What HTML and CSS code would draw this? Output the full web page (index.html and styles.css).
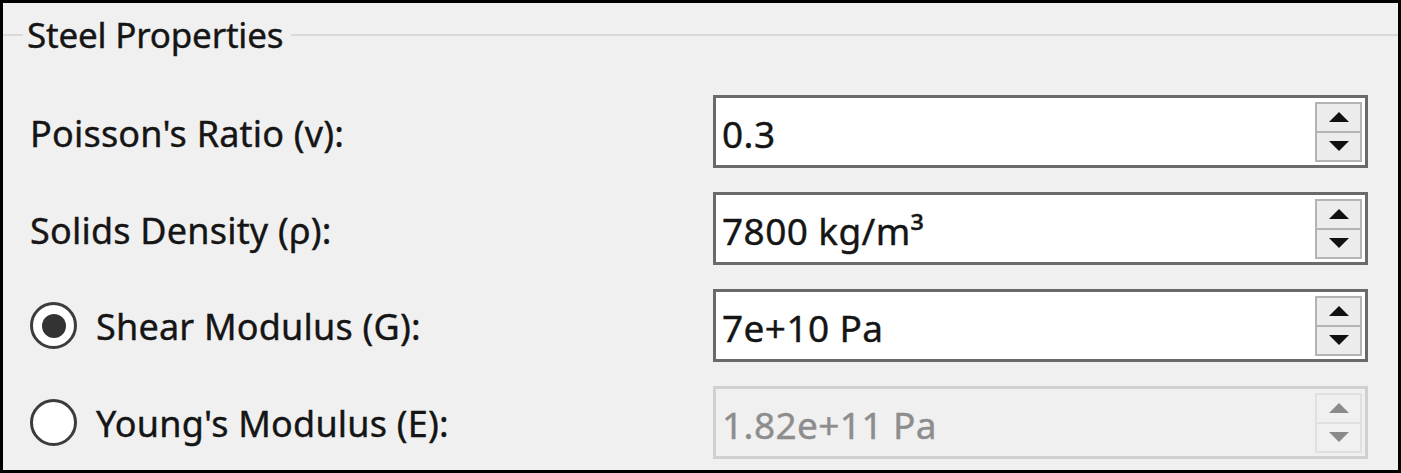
FILE: index.html
```html
<!DOCTYPE html>
<html>
<head>
<meta charset="utf-8">
<link rel="stylesheet" href="styles.css">
</head>
<body>
<div class="frame">
  <div class="legend">
    <span class="legend-line lead"></span>
    <span class="legend-text">Steel Properties</span>
    <span class="legend-line grow"></span>
  </div>
  <div class="rows">
    <div class="row">
      <div class="label">Poisson's Ratio (v):</div>
      <div class="spin">
        <span class="value">0.3</span>
        <div class="spin-btns"><span class="btn up"></span><span class="btn down"></span></div>
      </div>
    </div>
    <div class="row">
      <div class="label">Solids Density (ρ):</div>
      <div class="spin">
        <span class="value">7800 kg/m³</span>
        <div class="spin-btns"><span class="btn up"></span><span class="btn down"></span></div>
      </div>
    </div>
    <div class="row">
      <div class="label radio-label"><span class="radio checked"></span><span>Shear Modulus (G):</span></div>
      <div class="spin">
        <span class="value">7e+10 Pa</span>
        <div class="spin-btns"><span class="btn up"></span><span class="btn down"></span></div>
      </div>
    </div>
    <div class="row">
      <div class="label radio-label"><span class="radio"></span><span>Young's Modulus (E):</span></div>
      <div class="spin disabled">
        <span class="value">1.82e+11 Pa</span>
        <div class="spin-btns"><span class="btn up"></span><span class="btn down"></span></div>
      </div>
    </div>
  </div>
</div>
</body>
</html>
```

FILE: styles.css
```css
html, body {
  margin: 0;
  padding: 0;
  background: #f0f0f0;
}

.frame {
  box-sizing: border-box;
  width: 1401px;
  height: 473px;
  border: 3px solid #000;
  background: #f0f0f0;
  padding-top: 12px;
  font-family: "Noto Sans", "DejaVu Sans", sans-serif;
  color: #151515;
  overflow: hidden;
}

.legend {
  display: flex;
  align-items: center;
  height: 40px;
}

.legend-line {
  height: 2px;
  background: #d9d9d9;
}

.legend-line.lead {
  width: 20px;
}

.legend-line.grow {
  flex: 1;
}

.legend-text {
  font-size: 35px;
  line-height: 40px;
  padding: 0 8px 0 4px;
  letter-spacing: -0.2px;
  -webkit-text-stroke: 0.4px #151515;
}

.rows {
  display: flex;
  flex-direction: column;
  gap: 24px;
  margin-top: 40px;
}

.row {
  display: grid;
  grid-template-columns: 710px 655px;
  height: 73px;
  align-items: center;
}

.label {
  padding-left: 27px;
  padding-top: 4px;
  font-size: 36px;
  letter-spacing: 0.2px;
  line-height: 40px;
  -webkit-text-stroke: 0.4px #151515;
}

.radio-label {
  display: flex;
  align-items: center;
  gap: 19px;
  padding-top: 0;
}

.radio-label span:last-child {
  padding-top: 2px;
}

.radio {
  box-sizing: border-box;
  width: 47px;
  height: 47px;
  border: 3px solid #3c3c3c;
  border-radius: 50%;
  background: #fff;
  display: flex;
  align-items: center;
  justify-content: center;
  -webkit-text-stroke: 0;
}

.radio.checked::after {
  content: "";
  width: 24px;
  height: 24px;
  border-radius: 50%;
  background: #333;
}

.spin {
  box-sizing: border-box;
  height: 73px;
  border: 3px solid #6a6a6a;
  background: #fff;
  display: flex;
  align-items: center;
  justify-content: space-between;
  padding: 0 3px 0 6px;
}

.value {
  font-size: 37px;
  padding-top: 4px;
  letter-spacing: 0.4px;
  color: #151515;
  -webkit-text-stroke: 0.4px #151515;
}

.spin-btns {
  display: flex;
  flex-direction: column;
  width: 47px;
  height: 60px;
}

.btn {
  flex: 1;
  box-sizing: border-box;
  border: 2px solid #b4b4b4;
  background: #ececec;
  display: flex;
  align-items: center;
  justify-content: center;
}

.btn.up {
  border-bottom-width: 1px;
}

.btn.down {
  border-top-width: 1px;
}

.btn.up::after {
  content: "";
  border-left: 10px solid transparent;
  border-right: 10px solid transparent;
  border-bottom: 10px solid #111;
}

.btn.down::after {
  content: "";
  border-left: 10px solid transparent;
  border-right: 10px solid transparent;
  border-top: 10px solid #111;
}

.spin.disabled {
  border-color: #d0d0d0;
  background: #f0f0f0;
}

.spin.disabled .value {
  color: #8d8d8d;
  -webkit-text-stroke: 0.4px #8d8d8d;
}

.spin.disabled .btn {
  border-color: #e0e0e0;
  background: #f0f0f0;
}

.spin.disabled .btn.up::after {
  border-bottom-color: #8a8a8a;
}

.spin.disabled .btn.down::after {
  border-top-color: #8a8a8a;
}
```
